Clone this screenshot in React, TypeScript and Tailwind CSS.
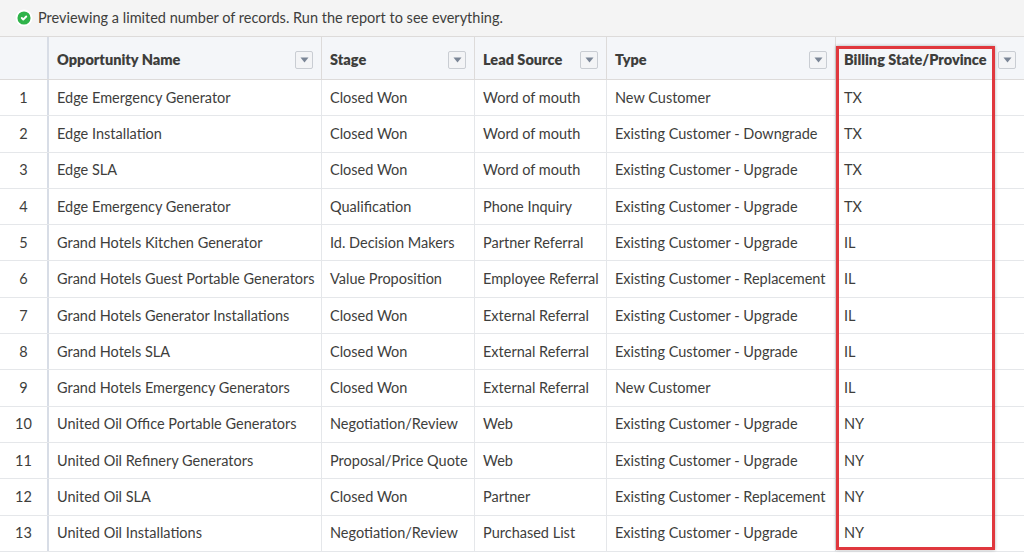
import { CheckCircle2 } from "lucide-react";

const rows = [
  ["Edge Emergency Generator", "Closed Won", "Word of mouth", "New Customer", "TX"],
  ["Edge Installation", "Closed Won", "Word of mouth", "Existing Customer - Downgrade", "TX"],
  ["Edge SLA", "Closed Won", "Word of mouth", "Existing Customer - Upgrade", "TX"],
  ["Edge Emergency Generator", "Qualification", "Phone Inquiry", "Existing Customer - Upgrade", "TX"],
  ["Grand Hotels Kitchen Generator", "Id. Decision Makers", "Partner Referral", "Existing Customer - Upgrade", "IL"],
  ["Grand Hotels Guest Portable Generators", "Value Proposition", "Employee Referral", "Existing Customer - Replacement", "IL"],
  ["Grand Hotels Generator Installations", "Closed Won", "External Referral", "Existing Customer - Upgrade", "IL"],
  ["Grand Hotels SLA", "Closed Won", "External Referral", "Existing Customer - Upgrade", "IL"],
  ["Grand Hotels Emergency Generators", "Closed Won", "External Referral", "New Customer", "IL"],
  ["United Oil Office Portable Generators", "Negotiation/Review", "Web", "Existing Customer - Upgrade", "NY"],
  ["United Oil Refinery Generators", "Proposal/Price Quote", "Web", "Existing Customer - Upgrade", "NY"],
  ["United Oil SLA", "Closed Won", "Partner", "Existing Customer - Replacement", "NY"],
  ["United Oil Installations", "Negotiation/Review", "Purchased List", "Existing Customer - Upgrade", "NY"],
];

const cols = "grid-cols-[49px_273px_153px_132px_229px_1fr]";

function Caret() {
  return (
    <span className="ml-auto mr-[8px] flex h-[18px] w-[18px] items-center justify-center rounded-[2px] border border-[#c9cdd3] bg-[#f3f4f6]">
      <svg width="9" height="6" viewBox="0 0 9 6"><path d="M0.5 0.5h8L4.5 5.5z" fill="#7a8596" /></svg>
    </span>
  );
}

export default function App() {
  const heads = ["Opportunity Name", "Stage", "Lead Source", "Type", "Billing State/Province"];
  return (
    <div className="relative h-[559px] w-[1024px] overflow-hidden bg-white text-[14.5px] text-[#3e3e3c]" style={{ fontFamily: "Lato, 'Noto Sans', sans-serif" }}>
      <div className="flex h-[37px] items-center gap-[5px] border-b border-[#dddbda] bg-[#f4f4f4] pl-[15px]">
        <CheckCircle2 className="h-[18px] w-[18px] fill-[#2fb34a] text-white" strokeWidth={2.5} />
        <span>Previewing a limited number of records. Run the report to see everything.</span>
      </div>
      <div className={`grid ${cols} h-[43px] border-b border-[#dddbda] bg-[#f4f6f9] font-extrabold text-[#3e3e3c]`}>
        <div className="border-r-2 border-[#d8dde6]" />
        {heads.map((h, i) => (
          <div key={h} className={`flex items-center pl-[8px] pt-[4px] ${i < 4 ? "border-r border-[#dddbda]" : ""}`}>
            <span>{h}</span>
            <Caret />
          </div>
        ))}
      </div>
      {rows.map((r, i) => (
        <div key={i} className={`grid ${cols} h-[36.3px] border-b border-[#e5e7ea]`}>
          <div className="flex items-center justify-center border-r-2 border-[#d8dde6] bg-white">{i + 1}</div>
          {r.map((c, j) => (
            <div key={j} className={`flex items-center whitespace-nowrap pl-[8px] ${j < 4 ? "border-r border-[#e5e7ea]" : ""}`}>{c}</div>
          ))}
        </div>
      ))}
      <div className="pointer-events-none absolute left-[836px] top-[46px] h-[504px] w-[159px] border-[3px] border-[#e0383e] shadow-[0_0_3px_rgba(0,0,0,0.3)]" />
    </div>
  );
}
